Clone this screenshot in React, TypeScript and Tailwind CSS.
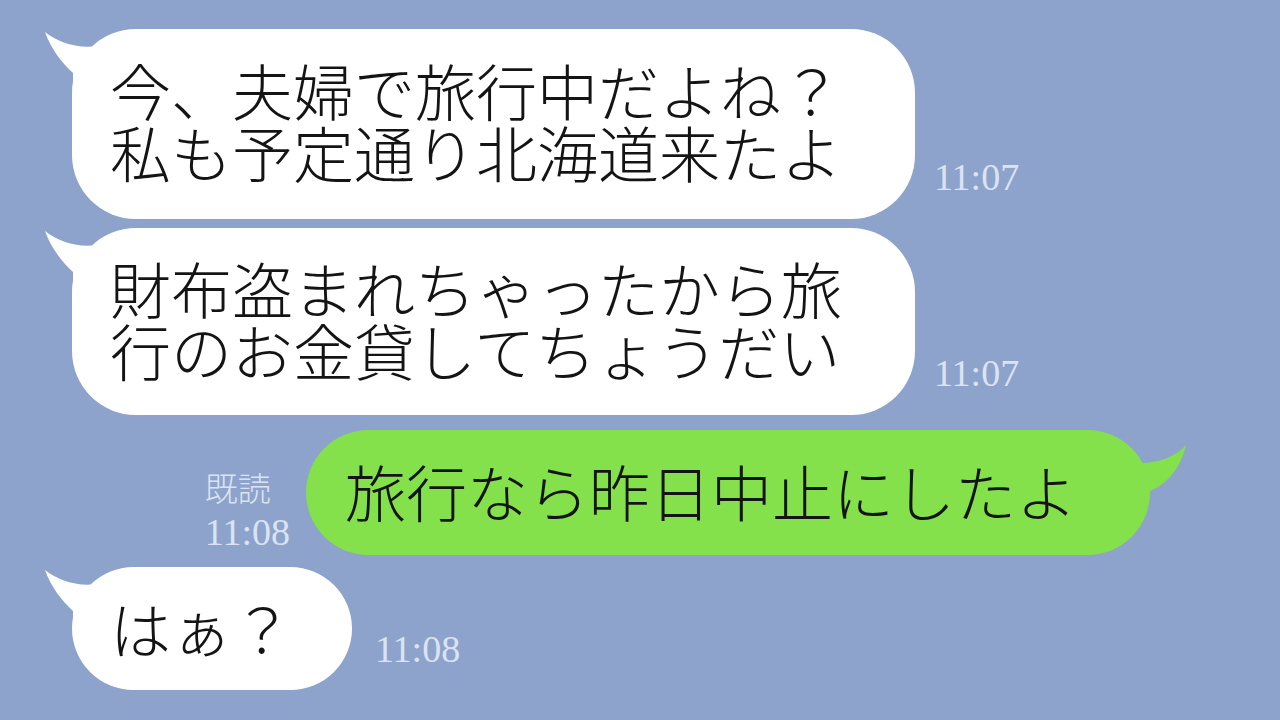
import React from "react";

const jp = { fontFamily: '"Noto Sans CJK JP", "Noto Sans", sans-serif' };
const serif = { fontFamily: '"Liberation Serif", "Noto Sans CJK JP", serif' };

function LeftTail() {
  return (
    <svg
      className="absolute left-[-30px] top-0"
      width="80"
      height="70"
      viewBox="0 0 80 70"
    >
      <path
        d="M3 3 C15 13 35 20 55 17 L72 62 L31 62 L31 44 C20 34 9 20 3 3 Z"
        fill="#ffffff"
      />
    </svg>
  );
}

function RightTail() {
  return (
    <svg
      className="absolute right-[-40px] top-0"
      width="80"
      height="70"
      viewBox="0 0 80 70"
    >
      <path
        d="M76 15 C66 26 50 33 30 33 L20 62 L38 62 C56 55 70 40 76 15 Z"
        fill="#84e04b"
      />
    </svg>
  );
}

function Time({ t }: { t: string }) {
  return (
    <span className="text-[38px] leading-none text-[#dbe3f2]" style={serif}>
      {t}
    </span>
  );
}

export default function App() {
  return (
    <div className="w-[1280px] h-[720px] overflow-hidden bg-[#8da3cb] pt-[29px]" style={jp}>
      {/* message 1 */}
      <div className="flex items-end pl-[72px]">
        <div className="relative w-[843px] rounded-[64px] bg-white pl-[38px] pr-[20px] pt-[30px] pb-[36px] text-[61px] leading-[62px] font-light text-[#141414]">
          <LeftTail />
          <p className="relative">今、夫婦で旅行中だよね？</p>
          <p className="relative">私も予定通り北海道来たよ</p>
        </div>
        <div className="ml-[19px] mb-[23px]">
          <Time t="11:07" />
        </div>
      </div>

      {/* message 2 */}
      <div className="mt-[9px] flex items-end pl-[72px]">
        <div className="relative w-[843px] rounded-[64px] bg-white pl-[38px] pr-[20px] pt-[29px] pb-[34px] text-[61px] leading-[62px] font-light text-[#141414]">
          <LeftTail />
          <p className="relative">財布盗まれちゃったから旅</p>
          <p className="relative">行のお金貸してちょうだい</p>
        </div>
        <div className="ml-[19px] mb-[23px]">
          <Time t="11:07" />
        </div>
      </div>

      {/* my reply */}
      <div className="mt-[15px] flex items-end justify-end pr-[130px]">
        <div className="mr-4 mb-[4px] flex flex-col items-start">
          <span className="text-[33px] leading-[30px] font-light text-[#dbe3f2]">既読</span>
          <span className="mt-[11px]">
            <Time t="11:08" />
          </span>
        </div>
        <div className="relative w-[844px] rounded-full bg-[#84e04b] pl-[39px] pr-[20px] pt-[30px] pb-[33px] text-[61px] leading-[62px] font-light text-[#141414]">
          <RightTail />
          <p className="relative">旅行なら昨日中止にしたよ</p>
        </div>
      </div>

      {/* message 4 */}
      <div className="mt-[12px] flex items-end pl-[72px]">
        <div className="relative w-[280px] rounded-full bg-white pl-[38px] pr-[20px] pt-[30px] pb-[31px] text-[61px] leading-[62px] font-light text-[#141414]">
          <LeftTail />
          <p className="relative">はぁ？</p>
        </div>
        <div className="ml-[23px] mb-[22px]">
          <Time t="11:08" />
        </div>
      </div>
    </div>
  );
}
